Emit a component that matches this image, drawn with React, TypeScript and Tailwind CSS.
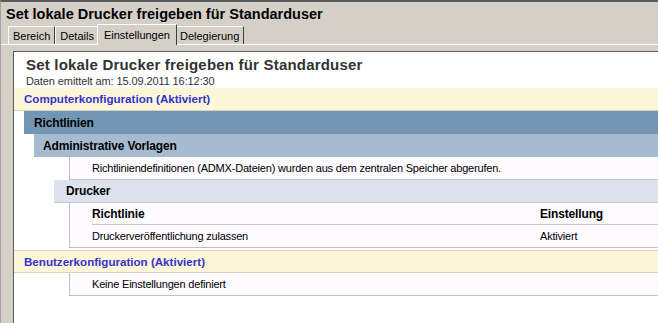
import React from 'react'

const font = { fontFamily: '"Liberation Sans", Arial, sans-serif' }

function Tab({ label, active }: { label: string; active?: boolean }) {
  if (active)
    return (
      <div className="relative -mx-[2px] z-10 h-[21px] mb-[-1px] px-[6px] pt-[2px] bg-[#d4d0c8] border-t border-l border-white border-r border-r-[#404040] text-[11px] leading-[16px]">
        {label}
      </div>
    )
  return (
    <div className="h-[18px] px-[4px] pt-[1px] border-t border-l border-white border-r border-r-[#404040] text-[11px] leading-[16px]">
      {label}
    </div>
  )
}

function Band({ indent, bg, children, className = '' }: any) {
  return (
    <div className={'flex ' + indent}>
      <div className={'flex-1 h-[23px] flex items-center font-bold text-[12px] tracking-[-0.15px] ' + bg + ' ' + className}>{children}</div>
    </div>
  )
}

export default function App() {
  const tabs = ['Bereich', 'Details', 'Einstellungen', 'Delegierung']
  return (
    <div style={font} className="w-[658px] h-[323px] overflow-hidden bg-[#d4d0c8] border-t-2 border-t-[#5a5a5a] border-l border-l-[#a0a0a0] text-black flex flex-col">
      <div className="h-[22px] pl-[5px] pt-[3px] text-[14.5px] leading-[18px] font-bold">Set lokale Drucker freigeben für Standarduser</div>
      <div className="flex items-end pl-[7px] h-[20px]">
        {tabs.map(t => <Tab key={t} label={t} active={t === 'Einstellungen'} />)}
      </div>
      <div className="flex-1 flex flex-col border-t border-white pl-[12px] pt-[6px]">
        <div className="flex-1 bg-white border-t border-l border-[#5a5a5a] flex flex-col">
          <div className="pl-[12px] pt-[4px] h-[36px]">
            <div className="text-[15px] leading-[18px] font-bold text-[#333] tracking-[0.2px]">Set lokale Drucker freigeben für Standarduser</div>
            <div className="text-[11px] leading-[14px] text-[#333] tracking-[-0.1px]">Daten emittelt am: 15.09.2011 16:12:30</div>
          </div>
          <div className="h-[23px] flex items-center pl-[10px] bg-[#fef6d8] border-b border-[#d8d2bc] text-[11.6px] font-bold text-[#3232c8]">Computerkonfiguration (Aktiviert)</div>
          <Band indent="pl-[10px]" bg="bg-[#7396b4]" className="pl-[10px]">Richtlinien</Band>
          <Band indent="pl-[20px]" bg="bg-[#a6bbd0]" className="pl-[9px]">Administrative Vorlagen</Band>
          <div className="flex pl-[55px]">
            <div className="flex-1 h-[23px] flex items-center pl-[22px] bg-[#fdfbff] border-l border-b border-[#c0c0c0] text-[11px] tracking-[-0.2px]">
              Richtliniendefinitionen (ADMX-Dateien) wurden aus dem zentralen Speicher abgerufen.
            </div>
          </div>
          <Band indent="pl-[40px]" bg="bg-[#dde3ee] border-b border-[#c0c4cc]" className="pl-[12px]">Drucker</Band>
          <div className="flex pl-[55px]">
            <div className="flex-1 pl-[22px] bg-[#fdfbff] border-l border-b border-[#c0c0c0] text-[11px] tracking-[-0.2px]">
              <div className="flex h-[22px] items-center border-b border-[#c8c8c8] font-bold text-[12px] tracking-[-0.15px]">
                <div className="w-[448px]">Richtlinie</div>
                <div>Einstellung</div>
              </div>
              <div className="flex h-[22px] items-center">
                <div className="w-[448px]">Druckerveröffentlichung zulassen</div>
                <div>Aktiviert</div>
              </div>
            </div>
          </div>
          <div className="h-[2px]" />
          <div className="h-[23px] flex items-center pl-[10px] bg-[#fef6d8] border-t border-b border-[#d8d2bc] text-[11.6px] font-bold text-[#3232c8]">Benutzerkonfiguration (Aktiviert)</div>
          <div className="flex pl-[55px]">
            <div className="flex-1 h-[23px] flex items-center pl-[22px] bg-[#fdfbff] border-l border-b border-[#c0c0c0] text-[11px] tracking-[-0.2px]">
              Keine Einstellungen definiert
            </div>
          </div>
        </div>
      </div>
    </div>
  )
}
